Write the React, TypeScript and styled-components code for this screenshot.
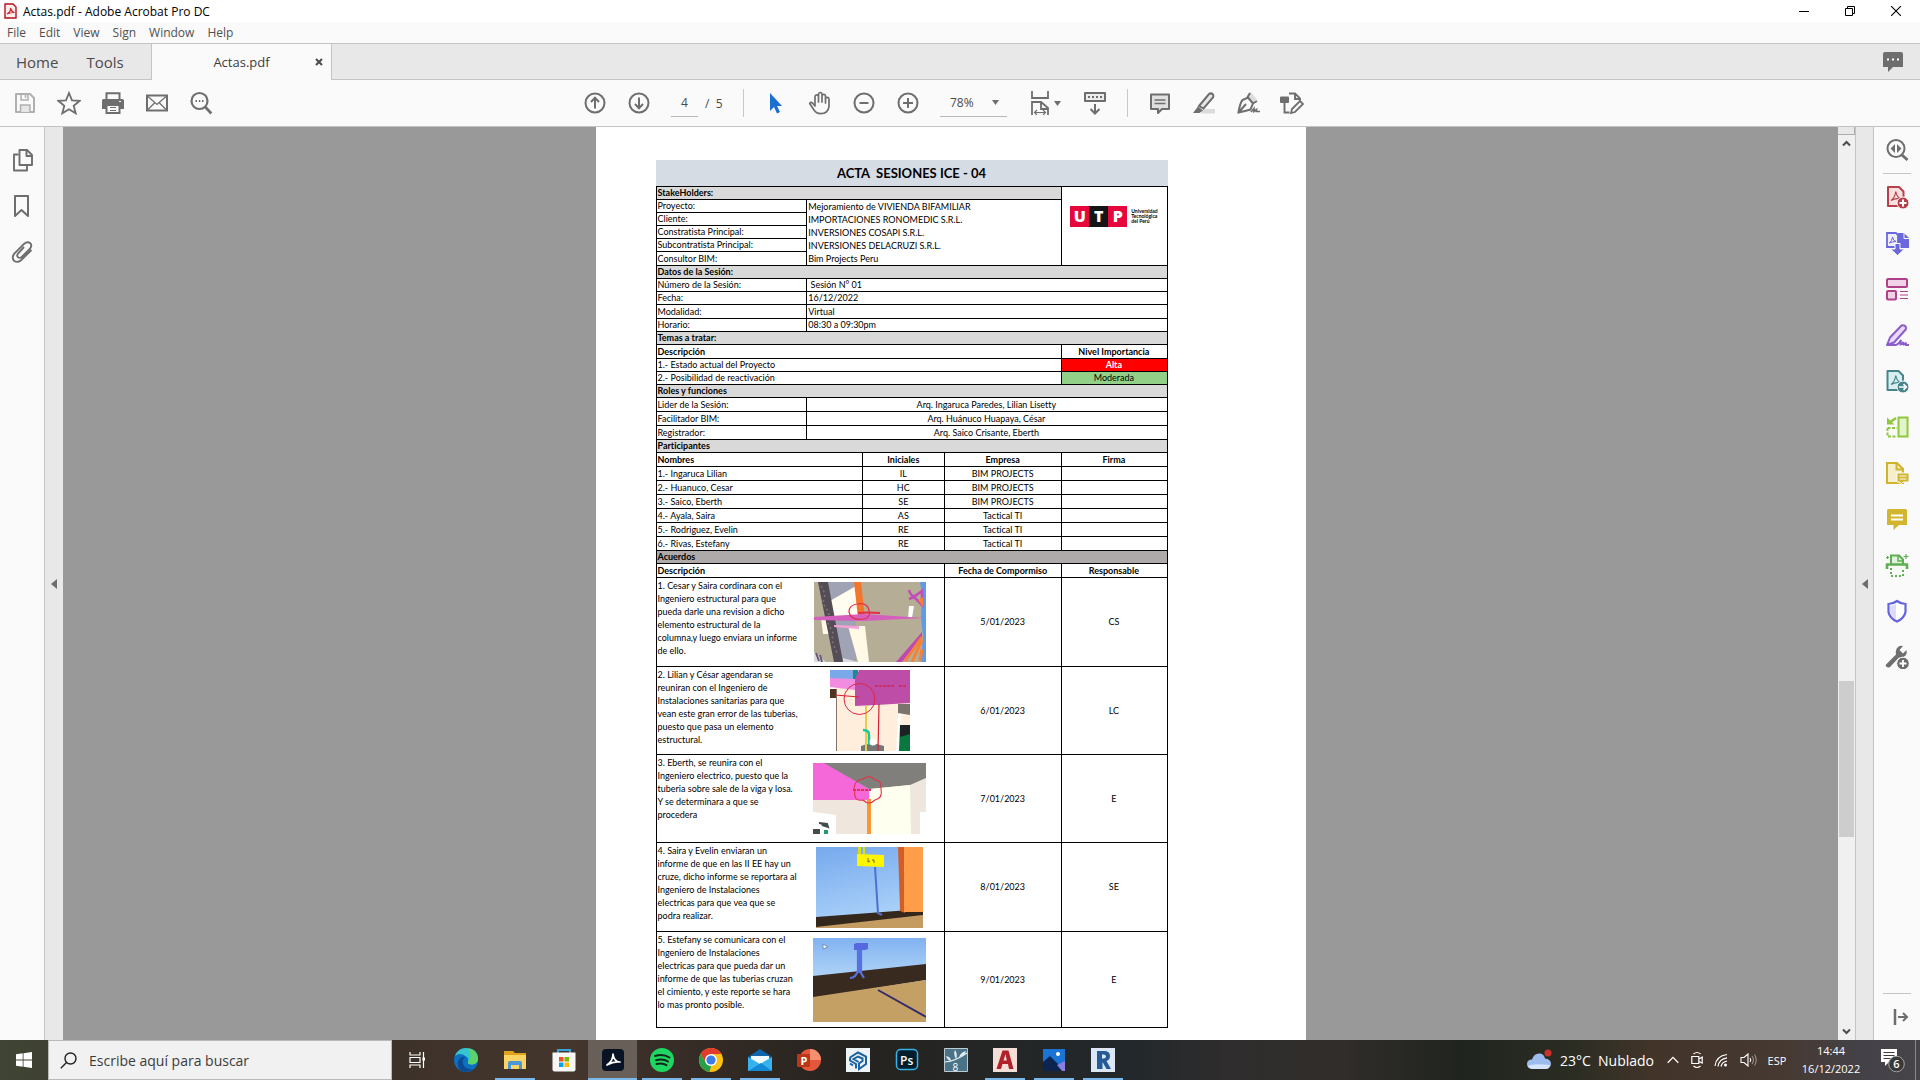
import React, { ReactNode } from 'react';
import styled, { createGlobalStyle } from 'styled-components';

const GlobalStyle = createGlobalStyle`
  *, *::before, *::after { box-sizing: border-box; }
  html, body { margin: 0; height: 100%; overflow: hidden; }
  body { font-family: "Open Sans", "Noto Sans", sans-serif; font-size: 12px; color: #4b4b4b; }
  button { border: 0; padding: 0; background: none; color: inherit; font: inherit; cursor: pointer; }
  svg { display: block; flex: none; }
`;

/* ---------- window frame ---------- */

const Screen = styled.div`
  display: flex;
  flex-direction: column;
  height: 100vh;
  background: #fafafa;
`;

const TitleBar = styled.header`
  display: flex;
  align-items: center;
  height: 22px;
  flex: none;
  padding: 0 4px;
  gap: 6px;
  background: #fff;
  color: #000;
`;

const WindowTitle = styled.span`
  flex: 1;
  padding-top: 2px;
  line-height: 16px;
`;

const CaptionButton = styled.button`
  display: grid;
  place-items: center;
  width: 40px;
  height: 22px;
`;

const MenuBar = styled.nav`
  display: flex;
  align-items: center;
  height: 21px;
  flex: none;
  padding: 0 7px;
  gap: 13px;
  background: #fafafa;
`;

const MenuItem = styled.button`
  line-height: 16px;
  color: #505050;
`;

const TabStrip = styled.div`
  display: flex;
  height: 37px;
  flex: none;
  background: #e8e8e8;
  border-top: 1px solid #c4c4c4;
`;

const FixedTabs = styled.div`
  display: flex;
  align-items: center;
  width: 151px;
  padding-left: 16px;
  gap: 28px;
  border-bottom: 1px solid #c4c4c4;
`;

const FixedTab = styled.button`
  font-size: 15px;
  line-height: 20px;
`;

const DocumentTab = styled.div`
  display: flex;
  align-items: center;
  width: 181px;
  padding: 0 8px;
  background: #fafafa;
  border: solid #c4c4c4;
  border-width: 0 1px;
`;

const DocumentName = styled.button`
  flex: 1;
  padding-left: 8px;
  font-size: 13px;
  line-height: 20px;
  color: #3c3c3c;
`;

const TabFill = styled.div`
  display: flex;
  flex: 1;
  align-items: center;
  justify-content: flex-end;
  padding-right: 13px;
  border-bottom: 1px solid #c4c4c4;
`;

/* ---------- toolbar ---------- */

const Toolbar = styled.div`
  display: grid;
  grid-template-columns: 1fr auto 1fr;
  align-items: center;
  height: 47px;
  flex: none;
  padding: 0 33px 0 0;
  border-bottom: 1px solid #c4c4c4;
  background: #fafafa;
`;

const ToolGroup = styled.div<{ $gap: number; $inset?: number }>`
  display: flex;
  align-items: center;
  gap: ${p => p.$gap}px;
  padding-left: ${p => p.$inset ?? 0}px;
`;

const ToolButton = styled.button<{ $wide?: boolean }>`
  display: flex;
  align-items: center;
  justify-content: center;
  gap: 2px;
  width: ${p => (p.$wide ? 38 : 28)}px;
  height: 28px;
  color: #6e6e6e;
`;

const ToolDivider = styled.span`
  width: 1px;
  height: 28px;
  background: #c8c8c8;
`;

const PageField = styled.label`
  display: flex;
  align-items: center;
  gap: 7px;
  width: 54px;
  height: 28px;
`;

const PageInput = styled.input`
  width: 27px;
  height: 28px;
  padding: 0;
  border: 0;
  border-bottom: 1px solid #b8b8b8;
  background: none;
  color: inherit;
  font: inherit;
  text-align: center;
`;

const ZoomField = styled.label`
  display: flex;
  align-items: center;
  width: 67px;
  height: 28px;
  padding: 0 8px 0 10px;
  border-bottom: 1px solid #b8b8b8;
`;

const ZoomSelect = styled.select`
  appearance: none;
  flex: 1;
  min-width: 0;
  padding: 0;
  border: 0;
  background: none;
  color: inherit;
  font: inherit;
`;

/* ---------- work area ---------- */

const WorkArea = styled.main`
  display: flex;
  flex: 1;
  min-height: 0;
`;

const LeftRail = styled.aside`
  display: flex;
  flex-direction: column;
  align-items: center;
  width: 45px;
  padding: 19px 0 0 2px;
  gap: 18px;
  border-right: 1px solid #c4c4c4;
`;

const RightRail = styled.aside`
  display: flex;
  flex-direction: column;
  align-items: center;
  width: 46px;
  padding: 9px 0;
  gap: 18px;
`;

const RailFirst = styled.div`
  padding-bottom: 9px;
  margin-bottom: -9px;
  border-bottom: 1px solid #c4c4c4;
`;

const RailLast = styled.div`
  margin-top: auto;
  padding-top: 9px;
  border-top: 1px solid #c4c4c4;
`;

const Gutter = styled.button<{ $lined?: boolean }>`
  display: grid;
  place-items: center;
  width: ${p => (p.$lined ? 19 : 18)}px;
  background: #e8e8e8;
  border: solid #c4c4c4;
  border-width: 0 ${p => (p.$lined ? '1px 0 1px' : '0')};
`;

const Canvas = styled.section`
  display: flex;
  flex: 1;
  min-width: 0;
  justify-content: center;
  overflow: hidden;
  background: #999;
`;

const ScrollBar = styled.div`
  display: flex;
  flex-direction: column;
  width: 17px;
  background: #f0f0f0;
`;

const SplitGrip = styled.span`
  height: 8px;
  background: #e8e8e8;
  border: solid #adadad;
  border-width: 0 1px 1px 0;
`;

const ScrollArrow = styled.button`
  display: grid;
  place-items: center;
  height: 17px;
`;

const ScrollSpace = styled.span<{ $share: number }>`
  flex: ${p => p.$share} 0 0;
`;

const ScrollThumb = styled(ScrollSpace)`
  margin: 0 1px;
  background: #cdcdcd;
`;

/* ---------- the document ---------- */

const Sheet = styled.article`
  flex: 0 0 40%;
  min-width: 700px;
  padding: 33px 138px 0 60px;
  background: #fff;
  color: #000;
  font-family: Lato, "Open Sans", sans-serif;
  font-size: 9px;
  line-height: 12px;
  font-variant-ligatures: none;
`;

const SheetTitle = styled.h1`
  margin: 0;
  background: #d6dce4;
  font-size: 13px;
  line-height: 26px;
  font-weight: 700;
  text-align: center;
  white-space: pre;
`;

const Minutes = styled.table`
  width: 100%;
  table-layout: fixed;
  border-collapse: collapse;
`;

const Row = styled.tr<{ $h: number }>`
  height: ${p => p.$h}px;
`;

const Cell = styled.td<{ $center?: boolean; $fill?: string; $ink?: string; $bold?: boolean }>`
  padding: 0 2px 0 1px;
  border: 1px solid #000;
  background: ${p => p.$fill ?? 'none'};
  color: ${p => p.$ink ?? 'inherit'};
  font-weight: ${p => (p.$bold ? 700 : 400)};
  text-align: ${p => (p.$center ? 'center' : 'left')};
  white-space: pre;
  overflow: hidden;
`;

const LogoCell = styled(Cell)`
  padding: 19px 0 0 8px;
  vertical-align: top;
`;

const Logo = styled.div`
  display: flex;
  align-items: center;
  gap: 4px;
`;

const LogoLetters = styled.div`
  display: flex;
`;

const LogoLetter = styled.span<{ $dark?: boolean }>`
  width: 19px;
  background: ${p => (p.$dark ? '#151515' : '#e6083c')};
  color: #fff;
  font-family: "Open Sans", sans-serif;
  font-size: 16px;
  font-weight: 800;
  line-height: 21px;
  text-align: center;
`;

const LogoName = styled.span`
  font-size: 5px;
  line-height: 5px;
  font-weight: 700;
`;

const Agreement = styled.div<{ $h: number }>`
  display: flex;
  height: ${p => p.$h}px;
`;

const AgreementText = styled.p`
  flex: 0 0 151px;
  margin: 0;
  padding-top: 1px;
  line-height: 13px;
  align-self: flex-start;
`;

const AgreementPicture = styled.figure`
  display: flex;
  flex: 0 0 122px;
  align-items: center;
  justify-content: center;
  margin: 0;
`;

/* ---------- taskbar ---------- */

const TaskBar = styled.footer`
  display: flex;
  height: 40px;
  flex: none;
  color: #fff;
  background: linear-gradient(90deg, #3f4434 0%, #3c3129 20%, #44362d 30%, #3a2e28 34%, #26231f 44%, #22282b 59%,
    #2f2d2d 64%, #302d2a 70%, #20241f 76%, #2b2d23 82%, #423429 86%, #463932 93%, #444248 97%, #464449 100%);
`;

const StartButton = styled.button`
  display: grid;
  place-items: center;
  width: 48px;
`;

const SearchBox = styled.label`
  display: flex;
  align-items: center;
  width: 344px;
  padding-left: 11px;
  gap: 12px;
  background: #f1f1f1;
  border: 1px solid #b9b9b9;
  color: #222;
`;

const SearchInput = styled.input`
  flex: 1;
  min-width: 0;
  padding: 0;
  border: 0;
  background: none;
  color: inherit;
  font: inherit;
  font-size: 14px;
  &::placeholder { color: #3c3c3c; opacity: 1; }
`;

const AppButton = styled.button<{ $running?: boolean; $active?: boolean }>`
  display: flex;
  flex-direction: column;
  align-items: center;
  justify-content: space-between;
  width: 49px;
  padding-top: 8px;
  background: ${p => (p.$active ? '#685f58' : 'none')};
  &::after {
    content: '';
    width: ${p => (p.$active ? '100%' : '40px')};
    height: 2px;
    background: ${p => (p.$running ? '#7ab8ec' : 'transparent')};
  }
`;

const Tray = styled.div`
  display: flex;
  align-items: center;
  margin-left: auto;
`;

const TrayButton = styled.button<{ $w: number }>`
  display: flex;
  align-items: center;
  justify-content: center;
  gap: 8px;
  width: ${p => p.$w}px;
  height: 40px;
  font-size: 11px;
  white-space: pre;
`;

const WeatherText = styled.span`
  font-size: 14px;
`;

const Clock = styled.time`
  line-height: 18px;
  text-align: center;
`;

const ShowDesktop = styled.button`
  width: 5px;
  height: 40px;
  border-left: 1px solid #8a888c;
`;

/* ---------- drawings ---------- */

type DrawProps = { w?: number; h?: number; children: ReactNode };

const Draw = ({ w = 24, h = 24, children }: DrawProps) => (
  <svg width={w} height={h} viewBox={`0 0 ${w} ${h}`} fill="none" stroke="currentColor" strokeWidth="2" aria-hidden="true">
    {children}
  </svg>
);

const Caret = () => (
  <svg width="7" height="5" viewBox="0 0 7 5" aria-hidden="true"><path d="M0 0h7L3.500 5z" fill="#6e6e6e" /></svg>
);

const fileTools: [string, ReactNode][] = [
  ['Guardar', <g stroke="#b0b0b0"><path d="M3 3h14l4 4v14H3z" strokeLinejoin="round" /><path d="M8 3v6h7V3M12.500 4v3" strokeWidth="1.500" /><path d="M7.500 21v-7h9.500v7" fill="#e6e6e6" strokeWidth="1.500" /></g>],
  ['Favorito', <path d="M12 2l3 7.300 7.700.5-6 5 2 7.500L12 18.200l-6.700 4.100 2-7.500-6-5L9 9.300z" strokeWidth="1.800" />],
  ['Imprimir', <g><path d="M5.500 8V2.200h13V8" strokeWidth="2" /><path d="M1 9.500Q1 8 2.500 8h19Q23 8 23 9.500V18h-4v-4H5v4H1z" fill="currentColor" stroke="none" /><path d="M5.500 14v8h13v-8z" fill="#fafafa" /><path d="M9 16.500h6M9 19.500h6" strokeWidth="1.200" /><path d="M18 10.500h2" stroke="#fafafa" strokeWidth="1" /></g>],
  ['Correo', <g><path d="M2 4.500h20v15H2z" strokeWidth="2" /><path d="M3 5.500l9 8 9-8M3 18.500l6.500-6.500M21 18.500L14.500 12" strokeWidth="1.300" /></g>],
  ['Buscar', <g><circle cx="10.500" cy="10" r="8" strokeWidth="2.200" /><path d="M16.300 16l6 6.500" strokeWidth="2.600" /><path d="M6.500 10h1.500M9.800 10h1.500M13 10h1.500" strokeWidth="1.800" /></g>],
];

const pageTools: [string, ReactNode][] = [
  ['Página anterior', <g><circle cx="12" cy="12" r="9.500" /><path d="M12 17.500V7M8 11l4-4.200L16 11" /></g>],
  ['Página siguiente', <g><circle cx="12" cy="12" r="9.500" /><path d="M12 6.500V17M8 13l4 4.200L16 13" /></g>],
];

const viewTools: [string, ReactNode][] = [
  ['Selección', <path d="M6 2v18l4-4 3 6.500 3-1.500-3-6h5z" fill="#1a6fd0" stroke="none" />],
  ['Mano', <path d="M7 15L4.500 12Q2.500 10.500 1.700 12.500l4.300 6.500q2.500 3.700 6.500 3.700 7.500 0 8.500-7V8q-.2-1.600-1.800-1.600T17.500 8v4V5q-.2-1.700-1.800-1.700T14 5v6V3.200q-.2-1.700-1.800-1.700t-1.700 1.700V11 5.500Q10.300 3.800 8.700 3.800T7 5.500z" strokeWidth="1.700" strokeLinejoin="round" />],
  ['Alejar', <g><circle cx="12" cy="12" r="9.500" /><path d="M7.500 12h9" /></g>],
  ['Acercar', <g><circle cx="12" cy="12" r="9.500" /><path d="M7 12h10M12 7v10" /></g>],
];

const markTools: [string, ReactNode][] = [
  ['Comentario', <g><path d="M3 3.500h18V18h-7l-4 4v-4H3z" fill="#e0e0e0" strokeLinejoin="round" /><path d="M6.500 9h11M6.500 12.500h11" strokeWidth="1.300" /></g>],
  ['Resaltar', <g><path d="M11 18h12v4.500H9z" fill="#dcdcdc" stroke="none" /><path d="M7 15L17 3q2-1.500 4 .5.800 1.500 0 3L11.500 17.500z" fill="#e6e6e6" /><path d="M6 15.500l5 4L7.500 22H1z" fill="currentColor" stroke="none" /></g>],
  ['Firmar', <g><path d="M13 3l6 7" stroke="#dcdcdc" strokeWidth="5" /><path d="M2.500 21.500Q4 12 6.500 9L12 6.500l5 6-2.500 6q-5 1.500-12 3zM3 21l7-8M11 7l3-5M16 13l5-3" strokeWidth="2" /><path d="M15 21l3-3.500v3l2.500-2v2H24" strokeWidth="1.700" /></g>],
  ['Editar', <g><path d="M9 2.500h6l5 5v3M15 3v5h4M4.500 12v9.500h5" strokeWidth="1.900" /><rect x="0" y="5.500" width="9" height="6.500" rx="1" fill="currentColor" stroke="none" /><path d="M12 18l8-8 3 3-8 8-4 1z" fill="#fafafa" strokeWidth="1.800" /></g>],
];

const leftTools: [string, ReactNode][] = [
  ['Miniaturas', <g><path d="M8.500 2h7.500l5 5v10H8.500zM15.500 2v6h5.500" strokeWidth="1.900" strokeLinejoin="round" /><path d="M7.500 6.500H3v16h13V18" strokeWidth="1.900" strokeLinejoin="round" /></g>],
  ['Marcadores', <path d="M4 2h13v20l-6.500-6L4 22z" strokeLinejoin="round" />],
  ['Adjuntos', <path d="M13 7l-6 6.500q-1.700 2.400.2 4 1.800 1 3.800-.8l8-8q2.400-3.200.3-5.500-3-2.300-6 .5l-10 10q-3 3.800-.3 7 3.500 2.600 7-.5L20.500 10" strokeWidth="1.900" />],
];

const Acro = ({ c }: { c: string }) => <path d="M6 15.500q4-3 4.800-9 1 6 5.200 7-5-.5-10 2" stroke={c} strokeWidth="1.200" />;

const rightTools: [string, ReactNode][] = [
  ['Crear PDF', <g stroke="#b8404a"><path d="M3 2h11l4.500 4.500V21H3z" fill="#f8dfe0" strokeLinejoin="round" /><Acro c="#b8404a" /><circle cx="18" cy="18" r="6" fill="#b8404a" stroke="#fafafa" strokeWidth="1" /><path d="M14.500 18h7M18 14.500v7" stroke="#fff" /></g>],
  ['Exportar PDF', <g stroke="#6a68dc"><path d="M13 2h6l5 5v10H13z" fill="#6a68dc" stroke="none" /><path d="M19 1v6.500h5" stroke="#fafafa" strokeWidth="1" /><path d="M2 2h9l2 2v12H2z" fill="#efeffb" strokeWidth="1.800" /><path d="M4.500 12q2.500-2 3-6 .8 4 3.500 4.500-3.500 0-6.500 1.500" strokeWidth="1" /><path d="M10 12.500h5V18h4.500l-7 6.500L5.500 18H10z" fill="#6a68dc" stroke="#fafafa" strokeWidth="1" /></g>],
  ['Organizar páginas', <g stroke="#b0408c"><rect x="2" y="2" width="20" height="8" rx="1" fill="#f0d3e6" /><rect x="2" y="14" width="9" height="8.500" rx="1" fill="#f0d3e6" /><path d="M15 14.500h8M15 18h8M15 21.500h8" strokeWidth="1.200" /></g>],
  ['Rellenar y firmar', <g stroke="#8a5ccc"><path d="M2 22L5 14.500 16.500 2.500q2-1 4 .8 1 1.700.2 3.200L9 19.500z" fill="#ead9f8" strokeLinejoin="round" /><path d="M2 22h9q3-1 5-5l-.5 4.500q2-.5 3-2.500v2.500q2 0 2.500-2v2.500H24" strokeWidth="1.800" /></g>],
  ['Enviar', <g stroke="#47858a"><path d="M2.500 2h11L18 6.500V21H2.500z" fill="#d8eef0" strokeLinejoin="round" /><Acro c="#47858a" /><circle cx="18" cy="18" r="6" fill="#47858a" stroke="#fafafa" strokeWidth="1" /><path d="M14 18h7M18.500 15.200l2.800 2.800-2.800 2.800" stroke="#fff" strokeWidth="1.700" /></g>],
  ['Comparar archivos', <g stroke="#8fc83c"><rect x="13.500" y="2.500" width="9" height="19" fill="#e3f3cc" /><path d="M2.500 13v8.500H12M2.500 13H12" strokeDasharray="3 1.500" /><path d="M11 3L4 8" strokeWidth="2.500" /><path d="M2 2.500v7h7.500z" fill="#8fc83c" stroke="none" /></g>],
  ['Revisión', <g stroke="#d0b42c"><path d="M2 2h10l6 6v14H2z" fill="#f6efcb" /><path d="M11.500 2v6.500H18" /><path d="M12 12h12v9h-6l-3 3v-3h-3z" fill="#d0b42c" stroke="#fafafa" strokeWidth="1" /><path d="M14.500 15h7M14.500 18h7" stroke="#fff" strokeWidth="1.200" /></g>],
  ['Comentar', <g><path d="M2 3.500Q2 2 3.500 2h17Q22 2 22 3.500V18h-8l-5.500 5V18H2z" fill="#d3b62f" stroke="none" /><path d="M6 8.500h12M6 12.500h12" stroke="#fff" /></g>],
  ['Escanear', <g stroke="#60ae54"><path d="M6 11V2.500h8l4 4V11" fill="#e0f2dc" /><path d="M13 3v5h5" strokeWidth="1.500" /><path d="M1 11.500h22M2 11v5M22 11v5" strokeWidth="2.600" /><path d="M6 15v8h12v-8" strokeDasharray="2 2" /><path d="M2.500 3v3M1 4.500h3M21 1v5M18.500 3.500h5" strokeWidth="1.200" /></g>],
  ['Proteger', <g stroke="#6464e0"><path d="M12 2q4 3 8.500 3v8q-1 6-8.500 9.500Q4.500 19 3.500 13V5Q8 5 12 2z" fill="#fff" strokeWidth="2.200" /><path d="M11 5Q8 7 5 7v6q1 4 6 7z" fill="#dcdcfa" stroke="none" /></g>],
  ['Más herramientas', <g stroke="none" fill="#6e6e6e"><path d="M1 19.500L11 9.500Q10 5 13 2q2.500-2 5-1l-3.500 4L18 8.500 21.500 5q1 3-1 5.500-3 3-6.500 2L5 22q-2 1.200-3.500-.2T1 19.500z" /><circle cx="18" cy="18.500" r="6.300" stroke="#fafafa" strokeWidth="1" /><path d="M14.500 18.500h7M18 15v7" stroke="#fff" strokeWidth="1.800" /></g>],
];

/* ---------- clash pictures ---------- */

const pictures: ReactNode[] = [
  <Draw w={112} h={80}><g stroke="none"><path d="M0 0h112v80H0z" fill="#b5ad95" /><path d="M0 0h42v80H0z" fill="#a0a3b4" /><path d="M14 20L42 4l8 32H20z" fill="#fffdf0" /><path d="M0 0h6l20 80H0z" fill="#b5ad95" /><path d="M7 36l8 0 4 16H9zM34 44h17l4 36H44z" fill="#fff9e6" /><path d="M4 0h10l15 80H20z" fill="#554d55" /><path d="M7 4l4 8-2 9 6 10-2 8 6 12-1 8 5 12" fill="none" stroke="#7d747c" strokeWidth="1.500" strokeDasharray="2 3" /><path d="M40 0h7l4 36h-7z" fill="#f3762c" /><path d="M112 0h-6l2 12-1 24 2 18-2 26h5z" fill="#609bea" /><path d="M95 24h5l-2 12h-4z" fill="#fff" /><path d="M95 8q2 7 6 6l7-5v14l-8-8-5 2" fill="none" stroke="#c24bba" strokeWidth="2.500" /><path d="M104 18l5-3v10z" fill="#f68135" /><path d="M0 35l50-3 60 4-60 3L0 38z" fill="#d55fbd" /><path d="M20 43l25 1v3l-25-2z" fill="#f79fd7" /><path d="M82 80l26-30v5L88 80z" fill="#be49b1" /><path d="M91 79l17-24M98 80l10-22M106 79l2-12" stroke="#f68135" strokeWidth="3" /><path d="M29 76l15 4H29zM0 70l12 10H0z" fill="#d9dae2" /><path d="M2 71l3 8M6 73l2 7" stroke="#6a5b6e" /><path d="M35 30q0-7 8-8 10-2 12 6 2 8-6 9-12 2-14-7z" fill="none" stroke="#e52d49" strokeWidth="1.200" /><path d="M44 31q8-1 22 0" fill="none" stroke="#e52d49" strokeWidth="2" /></g></Draw>,
  <Draw w={80} h={81}><g stroke="none"><path d="M0 0h80v81H0z" fill="#feeedb" /><path d="M0 0h26v9H0z" fill="#7aa9e9" /><path d="M0 8l25 1v11L0 17z" fill="#f28ce0" /><path d="M23 0h5v9h-5z" fill="#1d8a91" /><path d="M29 0h51v33l-34 2-21 1V9z" fill="#bd4da7" /><path d="M5 19h2v62H5z" fill="#84736c" /><path d="M0 17v64h6V18z" fill="#fff" /><path d="M0 19h6v9H0z" fill="#51341e" /><path d="M68 34h12v11L68 43z" fill="#79746e" /><path d="M68 44h3l-2 37h-3z" fill="#fff" /><path d="M70 55h10v26H69z" fill="#08783e" /><path d="M70 55h10v9l-10 3z" fill="#1d2224" /><path d="M31 76q10-5 23 0v5H31z" fill="#747879" /><path d="M36 36v45" stroke="#e6cf44" /><path d="M33 60q6 0 6 5v10" stroke="#15c7a5" strokeWidth="2.500" fill="none" /><path d="M49 34l-1 47M5 25l24 2" stroke="#d22434" strokeWidth="1.200" /><circle cx="43" cy="72" r="3.500" fill="#fff" /><circle cx="29.500" cy="29" r="15.500" fill="none" stroke="#e12643" strokeWidth="1" /><path d="M45 16h19M69 16h8" stroke="#d92a5e" strokeWidth="2" strokeDasharray="3 1" fill="none" /></g></Draw>,
  <Draw w={113} h={71}><g stroke="none"><path d="M0 0h113v71H0z" fill="#efe7de" /><path d="M0 0h13l43 26v11H0z" fill="#f468da" /><path d="M11 0h102v15L97 22 56 26z" fill="#817f7b" /><path d="M57 26l40-4 1 49H57z" fill="#fffff0" /><path d="M54 36h4v35h-4z" fill="#f89737" /><path d="M0 49l23 3v19H0zM107 49h6v22h-6z" fill="#fff" /><path d="M6 60l8 1 1 3-6-2M0 67h6v4H0z" stroke="#454c4a" fill="#454c4a" /><path d="M11 67h4v4h-4z" fill="#209c67" /><path d="M41 27q0-10 9-11 7-5 12 1 7 0 6 9 2 9-6 11-6 6-12 0-10 2-8-10z" fill="none" stroke="#e53047" strokeWidth="1.100" /><path d="M40 27h18" stroke="#e53047" strokeWidth="2" strokeDasharray="3 1" /></g></Draw>,
  <Draw w={107} h={81}><defs><linearGradient id="skyA" x1="0" x2="0.300" y1="0" y2="1"><stop stopColor="#76a9ed" /><stop offset="1" stopColor="#add3fa" /></linearGradient></defs><g stroke="none"><path d="M0 0h107v81H0z" fill="url(#skyA)" /><path d="M0 70l107-8v10L0 81z" fill="#34281d" /><path d="M0 80l107-12v13H0z" fill="#c49c61" /><path d="M82 0h7v66l-5-2z" fill="#d45d27" /><path d="M88 0h19v65H88z" fill="#ff9d49" /><path d="M42 0h3v8h-3zM47 0h2v8h-2z" fill="#dcdc16" /><path d="M41 7l27 1v12l-27-1z" fill="#fff500" /><path d="M59 20l3 46 4 2" stroke="#4e70cd" strokeWidth="2" fill="none" /><path d="M52 11v4l2-1M56 13h2v3" stroke="#6a6844" fill="none" strokeWidth="1" /></g></Draw>,
  <Draw w={113} h={84}><defs><linearGradient id="skyB" x1="0" x2="0" y1="0" y2="1"><stop stopColor="#81b2f0" /><stop offset="0.500" stopColor="#b2d6f8" /></linearGradient></defs><g stroke="none"><path d="M0 0h113v84H0z" fill="url(#skyB)" /><path d="M0 38l113-12v16L0 60z" fill="#382a1f" /><path d="M0 59l113-17v42H0z" fill="#c5a065" /><path d="M45 11v21q-2 8-8 8M48 11v24l3 5M46.500 11v24" stroke="#5871e0" strokeWidth="2.200" fill="none" /><path d="M41 6l3-1h11v6l-3 1H41z" fill="#5568dd" /><path d="M65 52l48 27" stroke="#342b6c" strokeWidth="2" /><path d="M10 6v5l5-2z" fill="#fff" stroke="#718eb8" strokeWidth="1" /></g></Draw>,
];

const agreements = [
  { h: 89, text: '1. Cesar y Saira cordinara con el\nIngeniero estructural para que\npueda darle una revision a dicho\nelemento estructural de la\ncolumna,y luego enviara un informe\nde ello.', date: '5/01/2023', who: 'CS' },
  { h: 88, text: '2. Lilian y César agendaran se\nreuniran con el Ingeniero de\nInstalaciones sanitarias para que\nvean este gran error de las tuberias,\npuesto que pasa un elemento\nestructural.', date: '6/01/2023', who: 'LC' },
  { h: 88, text: '3. Eberth, se reunira con el\nIngeniero electrico, puesto que la\ntuberia sobre sale de la viga y losa.\nY se determinara a que se\nprocedera', date: '7/01/2023', who: 'E' },
  { h: 89, text: '4. Saira y Evelin enviaran un\ninforme de que en las II EE hay un\ncruze, dicho informe se reportara al\nIngeniero de Instalaciones\nelectricas para que vea que se\npodra realizar.', date: '8/01/2023', who: 'SE' },
  { h: 96, text: '5. Estefany se comunicara con el\nIngeniero de Instalaciones\nelectricas para que pueda dar un\ninforme de que las tuberias cruzan\nel cimiento, y este reporte se hara\nlo mas pronto posible.', date: '9/01/2023', who: 'E' },
];

const stakeholders: [string, string, number][] = [
  ['Proyecto:', 'Mejoramiento de VIVIENDA BIFAMILIAR', 13],
  ['Cliente:', 'IMPORTACIONES RONOMEDIC S.R.L.', 13],
  ['Constratista Principal:', 'INVERSIONES COSAPI S.R.L.', 13],
  ['Subcontratista Principal:', 'INVERSIONES DELACRUZI S.R.L.', 13],
  ['Consultor BIM:', 'Bim Projects Peru', 14],
];

const session: [string, string, number][] = [
  ['Número de la Sesión:', ' Sesión N° 01', 13],
  ['Fecha:', '16/12/2022', 13],
  ['Modalidad:', 'Virtual', 14],
  ['Horario:', '08:30 a 09:30pm', 13],
];

const roles: [string, string, number][] = [
  ['Lider de la Sesión:', 'Arq. Ingaruca Paredes, Lilian Lisetty', 14],
  ['Facilitador BIM:', 'Arq. Huánuco Huapaya, César', 14],
  ['Registrador:', 'Arq. Saico Crisante, Eberth', 14],
];

const people = [
  ['1.- Ingaruca Lilian', 'IL', 'BIM PROJECTS'],
  ['2.- Huanuco, Cesar', 'HC', 'BIM PROJECTS'],
  ['3.- Saico, Eberth', 'SE', 'BIM PROJECTS'],
  ['4.- Ayala, Saira', 'AS', 'Tactical TI'],
  ['5.- Rodriguez, Evelin', 'RE', 'Tactical TI'],
  ['6.- Rivas, Estefany', 'RE', 'Tactical TI'],
];

const StakeValue = styled.div<{ $h: number }>`
  height: ${p => p.$h}px;
  line-height: ${p => p.$h}px;
`;

const Section = ({ title, fill = '#d9d9d9' }: { title: string; fill?: string }) => (
  <Row $h={13}><Cell as="th" colSpan={5} $bold $fill={fill}>{title}</Cell></Row>
);

const MinutesTable = () => (
  <Minutes>
    <colgroup>
      <col style={{ width: '29.500%' }} /><col style={{ width: '11%' }} /><col style={{ width: '16%' }} /><col style={{ width: '22.900%' }} /><col />
    </colgroup>
    <tbody>
      <Row $h={13}>
        <Cell as="th" colSpan={4} $bold $fill="#d9d9d9">StakeHolders:</Cell>
        <LogoCell rowSpan={6}>
          <Logo>
            <LogoLetters><LogoLetter>U</LogoLetter><LogoLetter $dark>T</LogoLetter><LogoLetter>P</LogoLetter></LogoLetters>
            <LogoName>{'Universidad\nTecnológica\ndel Perú'}</LogoName>
          </Logo>
        </LogoCell>
      </Row>
      {stakeholders.map(([k, , h], i) => (
        <Row $h={h} key={k}>
          <Cell>{k}</Cell>
          {i === 0 && (
            <Cell colSpan={3} rowSpan={5}>
              {stakeholders.map(([, value]) => <StakeValue key={value} $h={13}>{value}</StakeValue>)}
            </Cell>
          )}
        </Row>
      ))}
      <Section title="Datos de la Sesión:" />
      {session.map(([k, v, h]) => (
        <Row $h={h} key={k}><Cell>{k}</Cell><Cell colSpan={4}>{v}</Cell></Row>
      ))}
      <Section title="Temas a tratar:" />
      <Row $h={14}><Cell colSpan={4} $bold>Descripción</Cell><Cell $bold $center>Nivel Importancia</Cell></Row>
      <Row $h={13}><Cell colSpan={4}>1.- Estado actual del Proyecto</Cell><Cell $bold $center $fill="#f00" $ink="#fff">Alta</Cell></Row>
      <Row $h={13}><Cell colSpan={4}>2.- Posibilidad de reactivación</Cell><Cell $center $fill="#92d087">Moderada</Cell></Row>
      <Section title="Roles y funciones" />
      {roles.map(([k, v, h]) => (
        <Row $h={h} key={k}><Cell>{k}</Cell><Cell colSpan={4} $center>{v}</Cell></Row>
      ))}
      <Section title="Participantes" />
      <Row $h={14}>
        <Cell colSpan={2} $bold>Nombres</Cell><Cell $bold $center>Iniciales</Cell><Cell $bold $center>Empresa</Cell><Cell $bold $center>Firma</Cell>
      </Row>
      {people.map(([n, i, e]) => (
        <Row $h={14} key={n}><Cell colSpan={2}>{n}</Cell><Cell $center>{i}</Cell><Cell $center>{e}</Cell><Cell /></Row>
      ))}
      <Section title="Acuerdos" fill="#aeaaaa" />
      <Row $h={14}>
        <Cell colSpan={3} $bold>Descripción</Cell><Cell $bold $center>Fecha de Compormiso</Cell><Cell $bold $center>Responsable</Cell>
      </Row>
      {agreements.map((a, i) => (
        <Row $h={a.h} key={a.date}>
          <Cell colSpan={3}>
            <Agreement $h={a.h - 1}>
              <AgreementText>{a.text}</AgreementText>
              <AgreementPicture>{pictures[i]}</AgreementPicture>
            </Agreement>
          </Cell>
          <Cell $center>{a.date}</Cell>
          <Cell $center>{a.who}</Cell>
        </Row>
      ))}
    </tbody>
  </Minutes>
);

/* ---------- taskbar apps ---------- */

type TaskApp = { name: string; icon: ReactNode; running?: boolean; active?: boolean };

const taskApps: TaskApp[] = [
  { name: 'Vista de tareas', icon: <g stroke="#fff" strokeWidth="1.200"><path d="M5 4v3h10V4M5 20v-3h10v3M5 9.500h10v5H5zM18.500 4v16" /><path d="M17.500 9.500h2.500v3h-2.500z" fill="#fff" stroke="none" /></g> },
  { name: 'Edge', icon: <g stroke="none"><circle cx="12" cy="12" r="12" fill="#0c6fc0" /><path d="M1 8Q4 0 12 0q11 0 12 10 0 6-6 6.500-5 0-4-3 1-3-2-5Q6 4 1 8z" fill="#36c4d0" /><path d="M14 .3q9 1 10 9.700 0 6-6 6.500-5 0-4-3 5-4 0-13.200z" fill="#5bd46b" /><path d="M12 9q-4 1-3 7 2 6 10 5-4 3.500-9 2.800Q3 22 4 14q2-6 8-5z" fill="#0b4a93" /></g> },
  { name: 'Explorador', running: true, icon: <g stroke="none"><path d="M1 3h9l2 2h11v16H1z" fill="#e0a21a" /><path d="M1 7h22v14H1z" fill="#fbd466" /><path d="M5 21v-6q0-2 2-2h10q2 0 2 2v6h-3v-4H8v4z" fill="#4a98d6" /></g> },
  { name: 'Tienda', icon: <g stroke="none"><path d="M6 5V2h12v3" stroke="#38a3d8" strokeWidth="2" /><path d="M0.500 4.500h23v17q0 2-2 2h-19q-2 0-2-2z" fill="#f7f7f7" /><path d="M7 9h4.500v4.500H7z" fill="#f25022" /><path d="M12.500 9H17v4.500h-4.500z" fill="#7fba00" /><path d="M7 14.500h4.500V19H7z" fill="#00a4ef" /><path d="M12.500 14.500H17V19h-4.500z" fill="#ffb900" /></g> },
  { name: 'Acrobat', running: true, active: true, icon: <g><rect x="1" y="1" width="22" height="22" rx="4" fill="#071225" stroke="none" /><path d="M6 17q6-4 6-11 1 8 7 8-6-1-13 3z" stroke="#fff" strokeWidth="1.700" strokeLinejoin="round" /></g> },
  { name: 'Spotify', running: true, icon: <g><circle cx="12" cy="12" r="12" fill="#1fd662" stroke="none" /><path d="M5 8q8-2.500 14.500 1.500M6 12.200q7-2 12 1.300M6.500 16q6-1.500 10 1.200" stroke="#10281a" strokeLinecap="round" /></g> },
  { name: 'Chrome', running: true, icon: <g stroke="none"><circle cx="12" cy="12" r="12" fill="#fbc116" /><path d="M1.600 6A12 12 0 0 1 22.400 6H12L7 15z" fill="#e23b2e" /><path d="M1.600 6L7 15l5 3-1.500 5.900A12 12 0 0 1 1.600 6z" fill="#28a04a" /><circle cx="12" cy="12" r="6" fill="#fff" /><circle cx="12" cy="12" r="4.600" fill="#3b7de9" /></g> },
  { name: 'Correo', running: true, icon: <g stroke="none"><path d="M0 9L12 1l12 8v14H0z" fill="#1066ad" /><path d="M3 8h18v8H3z" fill="#f2fbff" /><path d="M0 9l12 7 12-7v14H0z" fill="#35b3f0" /><path d="M0 23l13-8 11 8z" fill="#1489d6" /></g> },
  { name: 'PowerPoint', icon: <g stroke="none"><circle cx="13" cy="12" r="11" fill="#e4573a" /><path d="M13 1a11 11 0 0 1 11 11H13z" fill="#f4906f" /><rect x="0" y="6" width="13" height="13" rx="1" fill="#bd3517" /><text x="3.500" y="16.500" fill="#fff" fontSize="11" fontWeight="700">P</text></g> },
  { name: 'SketchUp', icon: <g><path d="M0 0h24v24H0z" fill="#eef3f8" stroke="none" /><path d="M4 9.500L12 4.500l8 4v7.500l-7 5v-5.500l3.500-2.500v-2.500L12 8.500l-4.500 2.500 5 3M4 9.500v3l6 3.500v4.500M4 15.500l3 2" stroke="#1a62a0" strokeWidth="2" /></g> },
  { name: 'Photoshop', icon: <g><rect x="1.500" y="1.500" width="21" height="20" rx="4" fill="#001d2e" stroke="#35b5e6" strokeWidth="1.500" /><text x="5" y="16.500" fill="#fff" stroke="none" fontSize="12" fontWeight="600">Ps</text></g> },
  { name: 'Olive', icon: <g><path d="M.5.500h23v23H.5z" fill="#4a7388" stroke="#bccbd2" strokeWidth="1" /><path d="M1 14Q12 13 23 5" stroke="#e3edf0" strokeWidth="1.200" /><path d="M12 11Q9 6 11 2q3 4 1 9zM15 9q2-5 7-6-1 5-7 6zM7 13Q3 12 2 8q5 1 5 5z" fill="#e3edf0" stroke="none" /><text x="8.500" y="22.500" fill="#fff" stroke="none" fontSize="10">8</text></g> },
  { name: 'AutoCAD', running: true, icon: <g stroke="none"><path d="M0 0h24v24H0z" fill="#f4ded8" /><path d="M3.500 21L9.500 2.500h6L20.500 21H16l-1-5H9.500L8 21zM10.500 12.500h3.300L12.500 6z" fill="#b0212a" fillRule="evenodd" /></g> },
  { name: 'Fotos', running: true, icon: <g stroke="none"><path d="M1 1h22v22H1z" fill="#1a74d6" /><path d="M1 14L8 8l15 15H1z" fill="#0b2550" /><path d="M23 13v10h-3l-5-6z" fill="#8a7ee0" /><circle cx="16" cy="6" r="2" fill="#fff" /></g> },
  { name: 'Revit', running: true, icon: <g stroke="none"><path d="M0 0h24v24H0z" fill="#dce7f6" /><path d="M6 3h7q6 0 6 5 0 4-3.500 5L20 21h-4.500l-4-7v7H6zM11 6.500v4h2q2-.3 2-2t-2-2z" fill="#265a96" fillRule="evenodd" /></g> },
];

const IconButtons = ({ items }: { items: [string, ReactNode][] }) => (
  <>
    {items.map(([name, art]) => (
      <ToolButton key={name} aria-label={name}><Draw>{art}</Draw></ToolButton>
    ))}
  </>
);

export default function App() {
  return (
    <Screen>
      <GlobalStyle />
      <TitleBar>
        <Draw w={13} h={16}><path d="M1 1h8l3 3v11H1z" stroke="#b5121b" strokeWidth="1.400" fill="#fdeeee" /><path d="M3 11q4-2 3.500-6 1 4 4 4.500-4 0-7.500 1.500z" stroke="#d3222a" strokeWidth="1.200" /></Draw>
        <WindowTitle>Actas.pdf - Adobe Acrobat Pro DC</WindowTitle>
        <ToolGroup $gap={6}>
          <CaptionButton aria-label="Minimizar"><Draw w={10} h={10}><path d="M0 5.500h10" strokeWidth="1" /></Draw></CaptionButton>
          <CaptionButton aria-label="Restaurar"><Draw w={10} h={10}><path d="M.5 2.500h7v7h-7zM2.500 2.500v-2h7v7h-2" strokeWidth="1" /></Draw></CaptionButton>
          <CaptionButton aria-label="Cerrar"><Draw w={10} h={10}><path d="M0 0l10 10M10 0L0 10" strokeWidth="1.100" /></Draw></CaptionButton>
        </ToolGroup>
      </TitleBar>
      <MenuBar>
        {['File', 'Edit', 'View', 'Sign', 'Window', 'Help'].map(m => <MenuItem key={m}>{m}</MenuItem>)}
      </MenuBar>
      <TabStrip>
        <FixedTabs><FixedTab>Home</FixedTab><FixedTab>Tools</FixedTab></FixedTabs>
        <DocumentTab>
          <DocumentName>Actas.pdf</DocumentName>
          <button aria-label="Cerrar pestaña"><Draw w={8} h={8}><path d="M1 1l6 6M7 1L1 7" /></Draw></button>
        </DocumentTab>
        <TabFill>
          <ToolButton aria-label="Notificaciones"><Draw><path d="M2 4q0-2 2-2h16q2 0 2 2v13H12l-5 5v-5H2z" fill="currentColor" stroke="none" /><path d="M6 9.500h2M11 9.500h2M16 9.500h2" stroke="#fff" /></Draw></ToolButton>
        </TabFill>
      </TabStrip>
      <Toolbar>
        <ToolGroup $gap={16} $inset={11}><IconButtons items={fileTools} /></ToolGroup>
        <ToolGroup $gap={18}>
          <ToolGroup $gap={16}><IconButtons items={pageTools} /></ToolGroup>
          <PageField><PageInput aria-label="Página" defaultValue="4" /><span>/&nbsp; 5</span></PageField>
          <ToolDivider />
          <ToolGroup $gap={16}><IconButtons items={viewTools} /></ToolGroup>
          <ZoomField><ZoomSelect aria-label="Zoom" defaultValue="78%"><option>78%</option></ZoomSelect><Caret /></ZoomField>
          <ToolButton $wide aria-label="Ajustar ancho"><Draw><path d="M4 0v7h16V0M4 24V11h9l7 6v7M13 11v7h7" strokeWidth="1.800" /><path d="M7 21.500h10M9 19l-2.500 2.500L9 24M15 19l2.500 2.500L15 24" strokeWidth="1.200" /></Draw><Caret /></ToolButton>
          <ToolButton aria-label="Desplazamiento"><Draw><path d="M2 2h20v8H2z" strokeLinejoin="round" fill="#ececec" /><path d="M5 6h14" strokeDasharray="2 2" /><path d="M12 13v9M7.500 18l4.500 4.500 4.500-4.500" /></Draw></ToolButton>
          <ToolDivider />
          <ToolGroup $gap={16}><IconButtons items={markTools} /></ToolGroup>
        </ToolGroup>
      </Toolbar>
      <WorkArea>
        <LeftRail><IconButtons items={leftTools} /></LeftRail>
        <Gutter aria-label="Abrir panel izquierdo"><Draw w={6} h={10}><path d="M6 0v10L0 5z" fill="#6e6e6e" stroke="none" /></Draw></Gutter>
        <Canvas>
          <Sheet>
            <SheetTitle>{'ACTA  SESIONES ICE - 04'}</SheetTitle>
            <MinutesTable />
          </Sheet>
        </Canvas>
        <ScrollBar>
          <SplitGrip />
          <ScrollArrow aria-label="Subir"><Draw w={9} h={7}><path d="M1 5.500L4.500 2 8 5.500" /></Draw></ScrollArrow>
          <ScrollSpace $share={607} />
          <ScrollThumb $share={180} />
          <ScrollSpace $share={213} />
          <ScrollArrow aria-label="Bajar"><Draw w={9} h={7}><path d="M1 1.500L4.500 5 8 1.500" /></Draw></ScrollArrow>
        </ScrollBar>
        <Gutter $lined aria-label="Ocultar panel derecho"><Draw w={6} h={10}><path d="M6 0v10L0 5z" fill="#6e6e6e" stroke="none" /></Draw></Gutter>
        <RightRail>
          <RailFirst>
            <ToolButton aria-label="Buscar herramientas"><Draw><circle cx="11" cy="10.500" r="8.500" /><path d="M17 17l5.500 5" strokeWidth="2.800" /><path d="M10 6v9l-4.500-4.500zM12 6v9l4.500-4.500z" fill="currentColor" stroke="none" /></Draw></ToolButton>
          </RailFirst>
          <IconButtons items={rightTools} />
          <RailLast>
            <ToolButton aria-label="Contraer"><Draw><path d="M10 4v16" strokeWidth="2.500" /><path d="M13 12h9M18 8l4 4-4 4" /></Draw></ToolButton>
          </RailLast>
        </RightRail>
      </WorkArea>
      <TaskBar>
        <StartButton aria-label="Inicio"><Draw w={16} h={16}><path d="M0 2.200L6.700 1.300v6.300H0zM7.500 1.200L16 0v7.600H7.500zM0 8.400h6.700v6.300L0 13.800zM7.500 8.400H16V16l-8.500-1.200z" fill="#fff" stroke="none" /></Draw></StartButton>
        <SearchBox>
          <Draw w={17} h={17}><circle cx="10.500" cy="6.500" r="5.500" strokeWidth="1.400" /><path d="M6.500 10.500L.8 16.200" strokeWidth="1.400" /></Draw>
          <SearchInput aria-label="Buscar" placeholder="Escribe aquí para buscar" />
        </SearchBox>
        {taskApps.map(a => (
          <AppButton key={a.name} aria-label={a.name} $running={a.running} $active={a.active}><Draw>{a.icon}</Draw></AppButton>
        ))}
        <Tray>
          <TrayButton $w={138}>
            <Draw w={26} h={22}><g stroke="none"><path d="M6 20q-5-.5-5-5t5-4.500Q8 4 14 4.500q4 .5 5 5 6 .5 6 5.500-.5 4.500-5 5z" fill="#9cbcf0" /><path d="M2 17q5-3 22-1-1 4-4 4H6q-3-.5-4-3z" fill="#d6e4fb" /><circle cx="22" cy="4" r="3.500" fill="#c8322a" /></g></Draw>
            <WeatherText>{'23°C  Nublado'}</WeatherText>
          </TrayButton>
          <TrayButton $w={28} aria-label="Iconos ocultos"><Draw w={12} h={8}><path d="M.7 6.700L6 1.400l5.300 5.300" strokeWidth="1.300" /></Draw></TrayButton>
          <TrayButton $w={20} aria-label="Reunión"><Draw w={12} h={18}><g strokeWidth="1.200"><path d="M2.500 3Q6 0 9.500 3M2.500 15Q6 18 9.500 15M.8 5.500h7v7h-7zM8 8l3.200-2v6L8 10.500" /></g></Draw></TrayButton>
          <TrayButton $w={28} aria-label="Red"><Draw w={14} h={14}><g strokeWidth="1.200"><path d="M1 13Q2 3 13 1.500M4 13.500Q5 6 13 4.800M7 13.500Q8 9 13 8" /><circle cx="11.500" cy="12" r="1.500" fill="#fff" stroke="none" /></g></Draw></TrayButton>
          <TrayButton $w={26} aria-label="Volumen"><Draw w={17} h={14}><g strokeWidth="1.100"><path d="M1 4.500h3L8 1v12L4 9.500H1z" /><path d="M10 5q1.500 2 0 4" /><path d="M12 3q3 4 0 8M14.500 1.500q3.500 5.500 0 11" stroke="#9a928c" /></g></Draw></TrayButton>
          <TrayButton $w={32}>ESP</TrayButton>
          <TrayButton $w={76}><Clock>{'14:44\n16/12/2022'}</Clock></TrayButton>
          <TrayButton $w={46} aria-label="6 notificaciones"><Draw w={25} h={26}><g stroke="none"><path d="M1 2h16v13H9l-4 4v-4H1z" fill="#fff" /><path d="M3.500 5.500h11M3.500 8.500h11M3.500 11.500h7" stroke="#3c3a3e" strokeWidth="1.200" /><circle cx="16.500" cy="17" r="7.800" fill="#39383b" stroke="#a0a0a0" strokeWidth="1" /><text x="13.300" y="21" fill="#fff" fontSize="11" fontWeight="600">6</text></g></Draw></TrayButton>
          <ShowDesktop aria-label="Mostrar escritorio" />
        </Tray>
      </TaskBar>
    </Screen>
  );
}
